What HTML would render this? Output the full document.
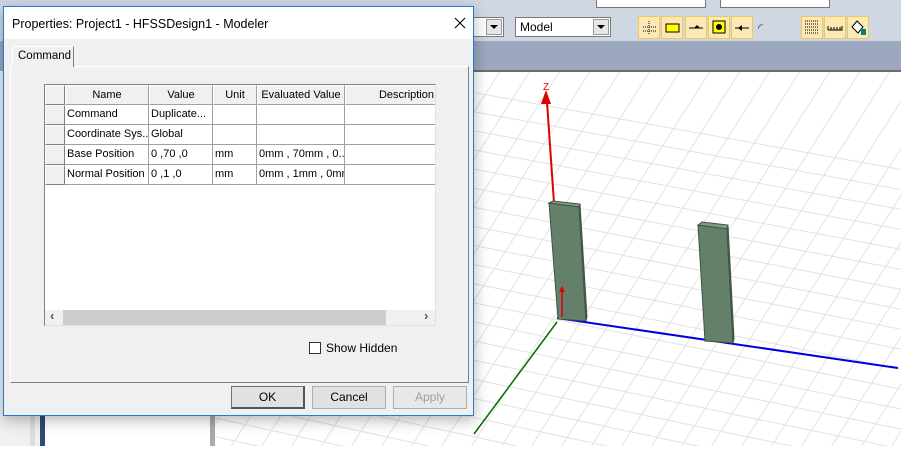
<!DOCTYPE html>
<html><head><meta charset="utf-8"><style>
*{box-sizing:border-box;margin:0;padding:0}
html,body{width:901px;height:468px;overflow:hidden}
body{position:relative;background:#fff;font-family:"Liberation Sans",Arial,sans-serif;font-size:12px;color:#000}
.a{position:absolute}
.btn{position:absolute;top:16px;width:22px;height:23px;background:#fce8b2;border:1px solid #f1c85f}
.dd{position:absolute;background:#fff;border:1px solid #7a7a7a;height:20px}
.dd .ar{position:absolute;right:1px;top:1px;width:16px;height:16px;background:#e6e6e6;border:1px solid #999}
.dd .ar:after{content:"";position:absolute;left:3px;top:5px;border-left:4px solid transparent;border-right:4px solid transparent;border-top:4px solid #000}
.cell{position:absolute;height:20px;border-right:1px solid #a0a0a0;border-bottom:1px solid #a0a0a0;padding:3px 2px;font-size:11px;white-space:nowrap;overflow:hidden;background:#fff}
.hd{background:#f0f0f0;text-align:center;border:1px solid #fff;border-right-color:#a0a0a0;border-bottom-color:#a0a0a0;height:20px}
.rh{background:#f0f0f0;border:1px solid #fff;border-right-color:#808080;border-bottom-color:#808080}
.pb{position:absolute;width:74px;height:23px;border:1px solid #adadad;background:#e1e1e1;text-align:center;line-height:21px;font-size:12px}
</style></head><body>
<div class="a" style="left:0;top:0;width:901px;height:42px;background:#cfd7e3"></div>
<div class="a" style="left:0;top:41px;width:901px;height:30px;background:#9ba8bf"></div>
<div class="a" style="left:215px;top:70px;width:686px;height:2px;background:#6c6c6c"></div>
<div class="a" style="left:596px;top:0;width:110px;height:8px;background:#fff;border:1px solid #777;border-top:none"></div>
<div class="a" style="left:720px;top:0;width:110px;height:8px;background:#fff;border:1px solid #777;border-top:none"></div>
<div class="dd" style="left:440px;top:17px;width:64px"><div class="ar"></div></div>
<div class="dd" style="left:515px;top:17px;width:96px;padding:2px 4px;font-size:12px">Model<div class="ar"></div></div>
<div class="btn" style="left:638px"><svg width="20" height="21"><g stroke="#000" stroke-dasharray="1 1"><path d="M4 10H17M10 4V17M4 14H17"/></g></svg></div>
<div class="btn" style="left:661px"><svg width="20" height="21"><rect x="4" y="7" width="13" height="8" fill="#ff0" stroke="#000"/></svg></div>
<div class="btn" style="left:685px"><svg width="20" height="21"><path d="M3 11H17" stroke="#000"/><path d="M8 11l3-3 3 3z"/></svg></div>
<div class="btn" style="left:708px"><svg width="20" height="21"><rect x="4" y="4" width="12" height="12" fill="#ff0" stroke="#000"/><circle cx="10" cy="10" r="3"/></svg></div>
<div class="btn" style="left:731px"><svg width="20" height="21"><path d="M3 11H17" stroke="#000"/><path d="M6 11l4-3v6z"/></svg></div>
<div class="a" style="left:758px;top:21px;font-size:12px;color:#333">&#x25DC;</div>
<div class="btn" style="left:801px"><svg width="20" height="21"><g stroke="#000" stroke-dasharray="1 1"><path d="M3 4H17M3 7H17M3 10H17M3 13H17M3 16H17"/></g></svg></div>
<div class="btn" style="left:824px"><svg width="20" height="21"><path d="M3 13H17V9M3 13V9M6 13V10M9 13V10M12 13V10M15 13V10" stroke="#000" fill="none"/></svg></div>
<div class="btn" style="left:847px"><svg width="20" height="21"><path d="M4 10l5-6 6 6-5 6z" fill="#fff" stroke="#000"/><rect x="13" y="12" width="5" height="6" fill="#008080"/></svg></div>
<div class="a" style="left:0;top:71px;width:215px;height:375px;background:#f0f0f0"></div>
<div class="a" style="left:30px;top:416px;width:5px;height:30px;background:#ddd"></div>
<div class="a" style="left:40px;top:416px;width:5px;height:30px;background:#34496e"></div>
<div class="a" style="left:45px;top:416px;width:165px;height:30px;background:#fff"></div>
<div class="a" style="left:210px;top:416px;width:5px;height:30px;background:#aaa"></div>
<svg class="a" style="left:215px;top:72px" width="686" height="374">
<g stroke="#e2e2e2" stroke-width="1">
<path d="M-300 -80L700 100M-300 -62L700 120M-300 -44L700 140M-300 -26L700 160M-300 -8L700 180M-300 10L700 200M-300 28L700 220M-300 46L700 240M-300 64L700 260M-300 82L700 280M-300 100L700 300M-300 118L700 320M-300 136L700 340M-300 154L700 360M-300 172L700 380M-300 190L700 400M-300 208L700 420M-300 226L700 440M-300 244L700 460M-300 262L700 480M-300 280L700 500M-300 298L700 520M-300 316L700 540M-300 334L700 560M-300 352L700 580M-300 370L700 600M-300 388L700 620M-300 406L700 640"/>
<path d="M-240 400L40 -40M-210 400L70 -40M-180 400L100 -40M-150 400L130 -40M-120 400L160 -40M-90 400L190 -40M-60 400L220 -40M-30 400L250 -40M0 400L280 -40M30 400L310 -40M60 400L340 -40M90 400L370 -40M120 400L400 -40M150 400L430 -40M180 400L460 -40M210 400L490 -40M240 400L520 -40M270 400L550 -40M300 400L580 -40M330 400L610 -40M360 400L640 -40M390 400L670 -40M420 400L700 -40M450 400L730 -40M480 400L760 -40M510 400L790 -40M540 400L820 -40M570 400L850 -40M600 400L880 -40M630 400L910 -40M660 400L940 -40M690 400L970 -40"/>
</g>
<path d="M342 246L683 296" stroke="#0000e0" stroke-width="2"/>
<path d="M342 250L259 362" stroke="#007000" stroke-width="1.5"/>
<path d="M339 131L332 30" stroke="#e00000" stroke-width="2"/>
<path d="M331 18l-5 14h10z" fill="#e00000"/>
<text x="328" y="18" fill="#e00000" font-size="10" font-family="Liberation Sans">Z</text>
<g fill="#65806a" stroke="#3e5440">
<path d="M334 131l30 4 7 114-28-2z"/><path d="M334 131l4-2 27 3-1 3z" fill="#7f9a82"/><path d="M364 135l1-3 7 113-1 4z" fill="#55705a"/>
<path d="M483 153l29 4 6 114-28-2z"/><path d="M483 153l4-3 26 3-1 4z" fill="#7f9a82"/><path d="M512 157l1-4 6 114-1 4z" fill="#55705a"/>
</g>
<path d="M347 245V218" stroke="#e00000" stroke-width="1.5"/><path d="M347 214l-3 6h6z" fill="#e00000"/>
</svg>
<div class="a" style="left:3px;top:6px;width:471px;height:410px;background:#f0f0f0;border:1px solid #1c7fd6;box-shadow:0 4px 14px rgba(0,0,0,.3)">
 <div class="a" style="left:0;top:0;width:469px;height:32px;background:#fff"></div>
 <div class="a" style="left:8px;top:10px;font-size:12.5px">Properties: Project1 - HFSSDesign1 - Modeler</div>
 <svg class="a" style="left:450px;top:10px" width="12" height="12"><path d="M1 1L11 11M11 1L1 11" stroke="#000" stroke-width="1.1"/></svg>
 <div class="a" style="left:6px;top:59px;width:459px;height:317px;border:1px solid #fff;border-right-color:#808080;border-bottom-color:#808080"></div>
 <div class="a" style="left:8px;top:39px;width:62px;height:21px;background:#f0f0f0;border:1px solid #fff;border-right-color:#808080;border-bottom:none;padding:3px 0 0 5px;font-size:11.5px;white-space:nowrap">Command</div>
 <div class="a" style="left:40px;top:77px;width:392px;height:242px;background:#fff;border:1px solid #808080;border-right-color:#e0e0e0;border-bottom-color:#e0e0e0;overflow:hidden">
  <div class="cell rh" style="left:0;top:0;width:20px"></div>
  <div class="cell hd" style="left:20px;top:0;width:84px">Name</div>
  <div class="cell hd" style="left:104px;top:0;width:64px">Value</div>
  <div class="cell hd" style="left:168px;top:0;width:44px">Unit</div>
  <div class="cell hd" style="left:212px;top:0;width:88px">Evaluated Value</div>
  <div class="cell hd" style="left:300px;top:0;width:100px;text-align:right;padding-right:10px">Description</div>
  <div class="cell rh" style="left:0;top:20px;width:20px"></div><div class="cell" style="left:20px;top:20px;width:84px">Command</div><div class="cell" style="left:104px;top:20px;width:64px">Duplicate...</div><div class="cell" style="left:168px;top:20px;width:44px"></div><div class="cell" style="left:212px;top:20px;width:88px"></div><div class="cell" style="left:300px;top:20px;width:100px"></div>
  <div class="cell rh" style="left:0;top:40px;width:20px"></div><div class="cell" style="left:20px;top:40px;width:84px">Coordinate Sys...</div><div class="cell" style="left:104px;top:40px;width:64px">Global</div><div class="cell" style="left:168px;top:40px;width:44px"></div><div class="cell" style="left:212px;top:40px;width:88px"></div><div class="cell" style="left:300px;top:40px;width:100px"></div>
  <div class="cell rh" style="left:0;top:60px;width:20px"></div><div class="cell" style="left:20px;top:60px;width:84px">Base Position</div><div class="cell" style="left:104px;top:60px;width:64px">0 ,70 ,0</div><div class="cell" style="left:168px;top:60px;width:44px">mm</div><div class="cell" style="left:212px;top:60px;width:88px">0mm , 70mm , 0...</div><div class="cell" style="left:300px;top:60px;width:100px"></div>
  <div class="cell rh" style="left:0;top:80px;width:20px"></div><div class="cell" style="left:20px;top:80px;width:84px">Normal Position</div><div class="cell" style="left:104px;top:80px;width:64px">0 ,1 ,0</div><div class="cell" style="left:168px;top:80px;width:44px">mm</div><div class="cell" style="left:212px;top:80px;width:88px">0mm , 1mm , 0mm</div><div class="cell" style="left:300px;top:80px;width:100px"></div>
  <div class="a" style="left:0;top:225px;width:391px;height:15px;background:#f0f0f0"></div>
  <div class="a" style="left:18px;top:225px;width:323px;height:15px;background:#cdcdcd"></div>
  <div class="a" style="left:5px;top:223px;font-size:13px;color:#555;font-weight:bold">&#x2039;</div>
  <div class="a" style="left:379px;top:223px;font-size:13px;color:#555;font-weight:bold">&#x203A;</div>
 </div>
 <div class="a" style="left:305px;top:335px;width:12px;height:12px;background:#fff;border:1px solid #333"></div>
 <div class="a" style="left:322px;top:334px;font-size:12px">Show Hidden</div>
 <div class="pb" style="left:227px;top:379px;border:1px solid #707070;border-bottom:2px solid #555;border-right:2px solid #555">OK</div>
 <div class="pb" style="left:308px;top:379px">Cancel</div>
 <div class="pb" style="left:389px;top:379px;color:#a0a0a0;background:#e8e8e8">Apply</div>
</div>
</body></html>
